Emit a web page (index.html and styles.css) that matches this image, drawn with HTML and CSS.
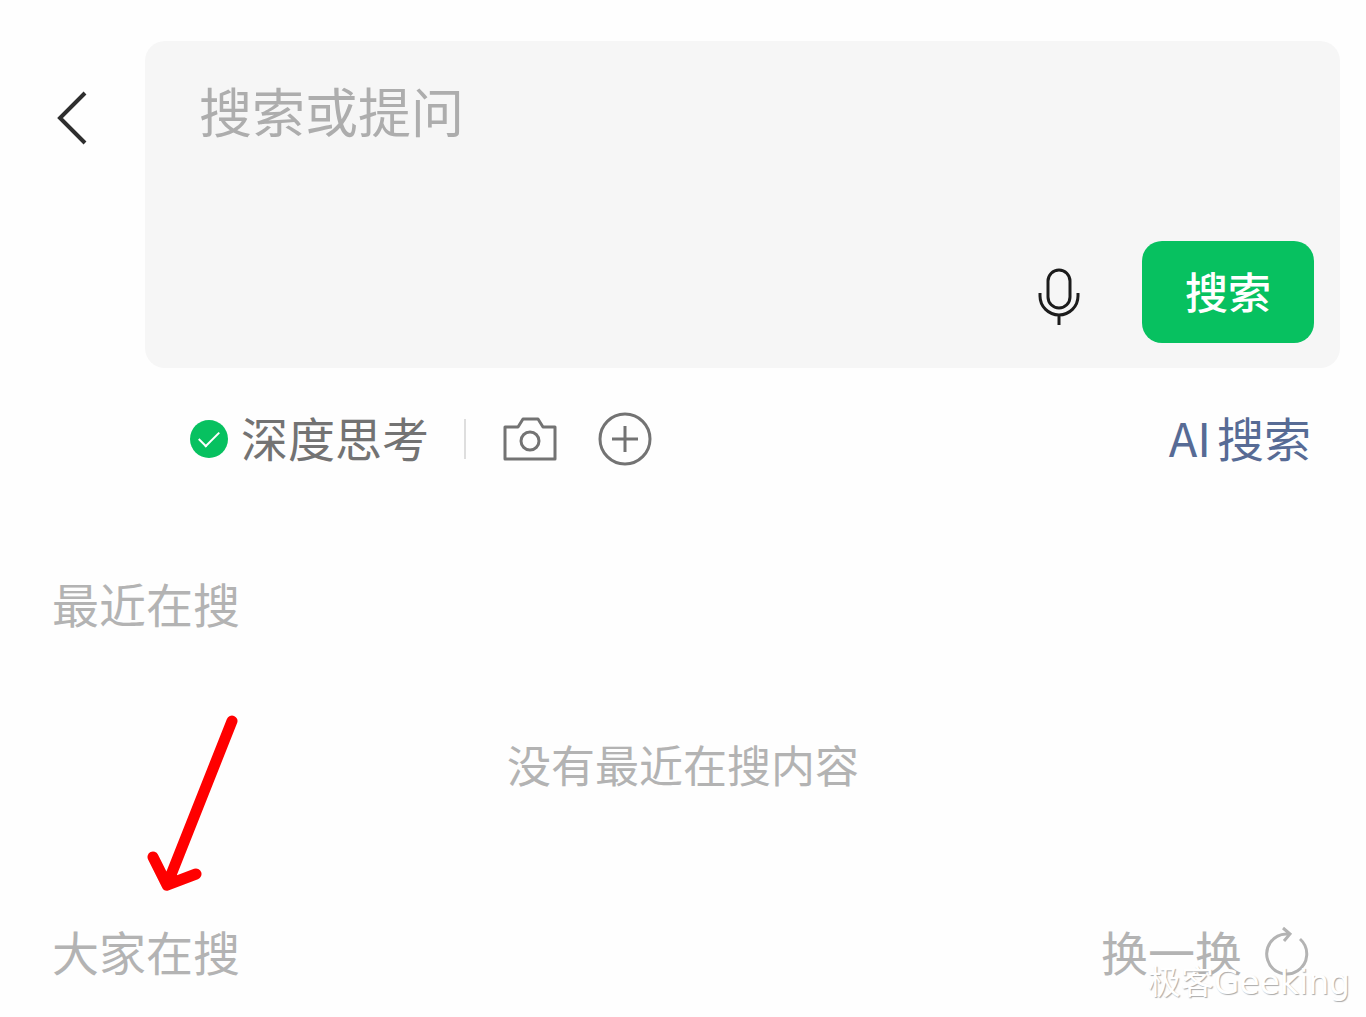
FILE: index.html
```html
<!DOCTYPE html>
<html lang="zh-CN">
<head>
    <meta charset="UTF-8">
    <meta name="viewport" content="width=device-width, initial-scale=1.0">
    <title>搜索</title>
    <link rel="stylesheet" href="styles.css">
</head>
<body>

    <!-- 搜索区 -->
    <header class="search-header">
        <button class="back-btn" type="button" aria-label="返回">
            <svg width="32" height="56" viewBox="0 0 32 56" fill="none" stroke="#2e2e2e" stroke-width="4">
                <path d="M30 3 5 28l25 25"/>
            </svg>
        </button>
        <form class="search-box">
            <textarea class="search-input" placeholder="搜索或提问" aria-label="搜索或提问"></textarea>
            <div class="search-actions">
                <button class="icon-btn mic-btn" type="button" aria-label="语音输入">
                    <svg width="42" height="58" viewBox="0 0 42 58" fill="none" stroke="#1c1c1c" stroke-width="3">
                        <rect x="10" y="2" width="22" height="38" rx="11"/>
                        <path d="M2 25v3a19 19 0 0 0 38 0v-3M21 47v10"/>
                    </svg>
                </button>
                <button class="search-btn" type="submit">搜索</button>
            </div>
        </form>
    </header>

    <!-- 工具栏 -->
    <div class="toolbar">
        <label class="think">
            <input class="think-check" type="checkbox" checked>
            <span class="tool-text">深度思考</span>
        </label>
        <span class="divider"></span>
        <button class="icon-btn" type="button" aria-label="拍照">
            <svg width="54" height="54" viewBox="0 0 54 54" fill="none" stroke="#737373" stroke-width="3" stroke-linejoin="round">
                <path d="M2 15h13l5-8h15l5 8h12v32H2z"/>
                <circle cx="27" cy="29" r="9"/>
            </svg>
        </button>
        <button class="icon-btn" type="button" aria-label="添加">
            <svg width="54" height="54" viewBox="0 0 54 54" fill="none" stroke="#737373" stroke-width="3">
                <circle cx="27" cy="27" r="25"/>
                <path d="M27 14v26M14 27h26"/>
            </svg>
        </button>
        <a class="ai-link" href="#"><span class="tool-text">AI</span><span class="tool-text">搜索</span></a>
    </div>

    <main class="content">
        <!-- 最近在搜 -->
        <section class="recent">
            <h2 class="section-title">最近在搜</h2>
            <p class="empty">没有最近在搜内容</p>
        </section>

        <!-- 大家在搜 -->
        <section class="popular">
            <h2 class="section-title">大家在搜</h2>
            <button class="refresh-btn" type="button">
                换一换
                <svg width="46" height="52" viewBox="0 0 46 52" fill="none" stroke="#b3b3b3" stroke-width="3">
                    <path d="M37 14A20 20 0 1 1 23 9h4M20 3l7 6-6 7"/>
                </svg>
            </button>
            <svg class="arrow" width="96" height="180" viewBox="0 0 96 180" fill="none" stroke="#ff0000" stroke-width="11" stroke-linecap="round" stroke-linejoin="round">
                <path d="M88 8 23 172M9 144l14 28 29-11M22 166l3 5"/>
            </svg>
        </section>
    </main>

    <div class="watermark">极客Geeking</div>

</body>
</html>
```
FILE: styles.css
```css
* {
    box-sizing: border-box;
}

body {
    position: relative;
    margin: 0;
    background-color: #fefefe;
    font-family: "Noto Sans CJK SC", sans-serif;
    color: #b3b3b3;
}

button {
    border: none;
    padding: 0;
    background: none;
    font-family: inherit;
    cursor: pointer;
}

svg {
    display: block;
}

/* 搜索区 */
.search-header {
    display: flex;
    align-items: flex-start;
    gap: 58px;
    padding: 41px 26px 0 55px;
}

.back-btn {
    margin-top: 49px;
}

.search-box {
    flex: 1;
    padding: 37px 26px 25px 54px;
    background-color: #f6f6f6;
    border-radius: 20px;
}

.search-input {
    display: block;
    width: 100%;
    height: 163px;
    padding: 0;
    border: none;
    outline: none;
    resize: none;
    background: none;
    font-family: inherit;
    font-size: 53px;
    line-height: 64px;
    color: #333;
}

.search-input::placeholder {
    color: #adadad;
}

.search-actions {
    display: flex;
    justify-content: flex-end;
    align-items: center;
    gap: 62px;
}

.mic-btn {
    padding-top: 10px;
}

.search-btn {
    width: 172px;
    height: 102px;
    padding-bottom: 4px;
    border-radius: 20px;
    background-color: #07c160;
    color: white;
    font-size: 43px;
    font-weight: 500;
    line-height: 60px;
}

/* 工具栏 */
.toolbar {
    display: flex;
    align-items: center;
    gap: 41px;
    padding: 39px 55px 0 190px;
    font-size: 47px;
    line-height: 60px;
}

.tool-text {
    padding-bottom: 4px;
}

.think {
    display: flex;
    align-items: center;
    gap: 13px;
    color: #737373;
}

.think-check {
    display: flex;
    justify-content: center;
    align-items: center;
    width: 38px;
    height: 38px;
    margin: 0;
    appearance: none;
    border-radius: 50%;
    background-color: #c8c8c8;
}

.think-check:checked {
    background-color: #07c160;
}

.think-check:checked::before {
    content: "";
    width: 18px;
    height: 9px;
    margin-bottom: 6px;
    border-left: 2px solid white;
    border-bottom: 2px solid white;
    transform: rotate(-45deg);
}

.divider {
    width: 2px;
    height: 40px;
    margin: 0 -4px 0 -6px;
    background-color: #dedede;
}

.ai-link {
    display: flex;
    gap: 6px;
    margin-left: auto;
    color: #576b95;
    text-decoration: none;
}

/* 内容区 */
.content {
    padding: 100px 52px 32px;
}

.section-title {
    margin: 0;
    font-size: 47px;
    font-weight: normal;
    line-height: 64px;
}

.empty {
    margin: 97px 0 123px;
    font-size: 44px;
    line-height: 64px;
    text-align: center;
}

.popular {
    position: relative;
    display: flex;
    justify-content: space-between;
    align-items: center;
}

.refresh-btn {
    display: flex;
    align-items: center;
    gap: 21px;
    padding-right: 5px;
    color: #b3b3b3;
    font-size: 47px;
    line-height: 64px;
}

/* 红色箭头 */
.arrow {
    position: absolute;
    left: 92px;
    bottom: 90px;
}

/* 水印 */
.watermark {
    position: absolute;
    right: 16px;
    bottom: 10px;
    color: white;
    font-family: "DejaVu Sans", "Noto Sans CJK SC", sans-serif;
    font-size: 33px;
    line-height: 44px;
    text-shadow: 1px 1px 1px #aaa;
}
```
